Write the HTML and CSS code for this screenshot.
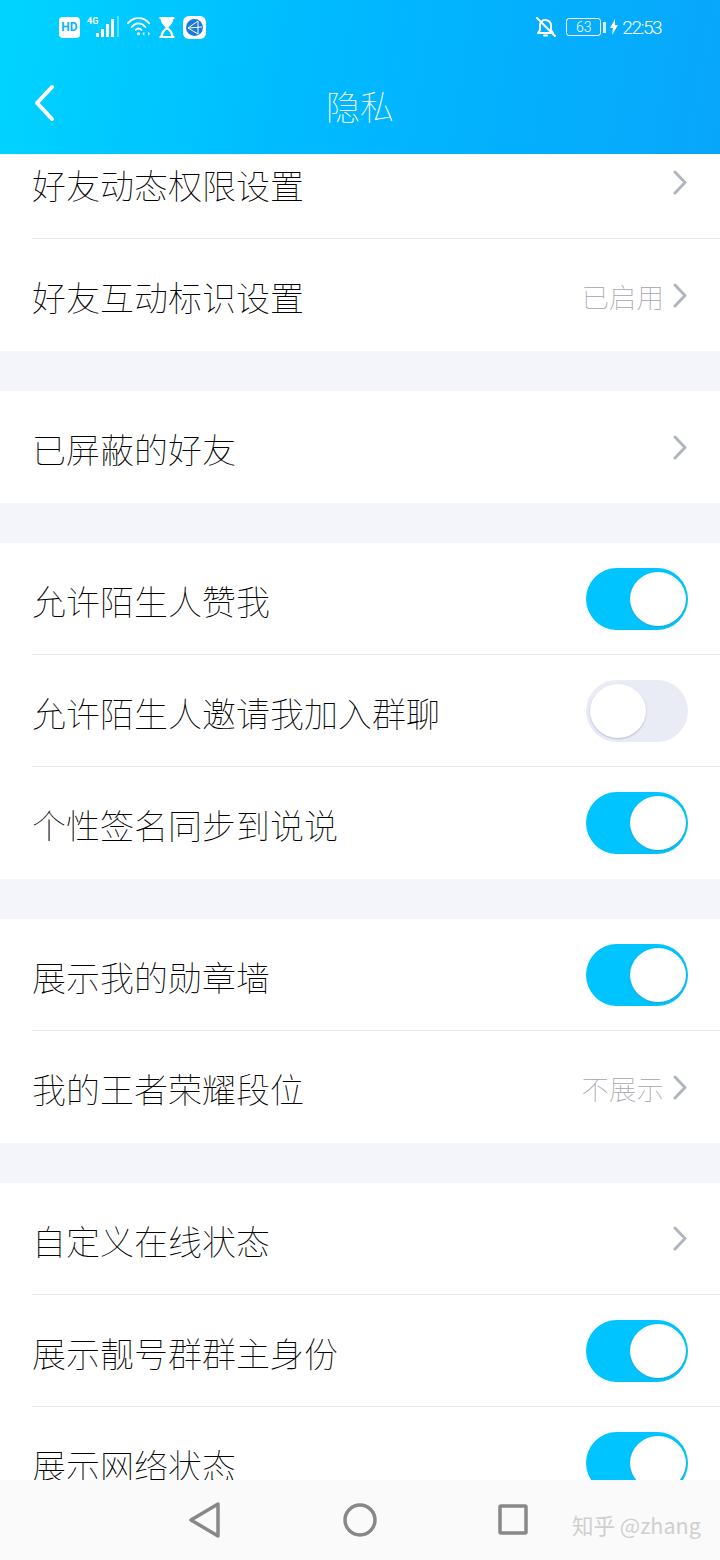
FILE: index.html
```html
<!DOCTYPE html>
<html>
<head>
    <meta charset="utf-8">
    <title>隐私</title>
    <link rel="stylesheet" href="styles.css">
</head>
<body>
    <div class="screen">
        <header class="header">
            <div class="status-bar">
                <div class="status-left">
                    <span class="hd-badge">HD</span>
                    <svg class="signal" width="33" height="24" viewBox="0 0 33 24">
                        <text x="0" y="9" class="signal-text">4G</text>
                        <rect x="9" y="18" width="3" height="4" fill="#fff"/>
                        <rect x="14" y="14" width="3" height="8" fill="#fff"/>
                        <rect x="19" y="9" width="3" height="13" fill="#fff"/>
                        <rect x="24" y="4" width="3" height="18" fill="#fff"/>
                        <rect x="30" y="1" width="2" height="21" fill="#fff" opacity="0.35"/>
                    </svg>
                    <svg class="wifi" width="25" height="22" viewBox="0 0 26 22" fill="none" stroke="#fff" stroke-width="2" stroke-linecap="round">
                        <path d="M1 7 C7 0 17 0 23 7"/>
                        <path d="M5 11 C9 6 15 6 19 11"/>
                        <path d="M9 14 C11 12 13 12 15 14"/>
                        <circle cx="12" cy="18" r="1.6" fill="#fff" stroke="none"/>
                        <path d="M18 16 L16 18 L18 20 Z" fill="#fff" stroke="none"/>
                        <path d="M22 16 L24 18 L22 20 Z" fill="#fff" stroke="none"/>
                    </svg>
                    <svg class="hourglass" width="16" height="21" viewBox="0 0 15 21" fill="none" stroke="#fff" stroke-width="2">
                        <path d="M0 1 H15 M0 20 H15"/>
                        <path d="M2 1 C2 7 6 8 7.5 10.5 C9 8 13 7 13 1 Z" fill="#fff"/>
                        <path d="M7.5 10.5 C6 13 2 14 2 20 H13 C13 14 9 13 7.5 10.5 Z"/>
                    </svg>
                    <svg class="app-icon" width="23" height="23" viewBox="0 0 23 23">
                        <rect width="23" height="23" rx="6" fill="#fff"/>
                        <circle cx="11.5" cy="11.5" r="8.5" fill="#1a7ad4"/>
                        <path d="M5 12 L15 5 L15 18 Z M5 12 L19 11" fill="none" stroke="#fff" stroke-width="1"/>
                    </svg>
                </div>
                <div class="status-right">
                    <svg class="bell" width="20" height="20" viewBox="0 0 20 20" fill="none" stroke="#fff" stroke-width="2" stroke-linecap="round" stroke-linejoin="round">
                        <path d="M2 16 H17 L15 13 V8 C15 5 12 3 9 3 C6 3 4 6 4 8 V13 Z"/>
                        <path d="M1 1 L19 19"/>
                        <path d="M8 18.5 H11"/>
                    </svg>
                    <span class="battery"><span class="battery-level">63</span></span>
                    <span class="battery-tip"></span>
                    <svg class="bolt" width="8" height="16" viewBox="0 0 8 16"><path d="M5 0 L0 9 H3 L2 16 L8 6 H5 Z" fill="#fff"/></svg>
                    <span class="clock">22:53</span>
                </div>
            </div>
            <div class="title-bar">
                <svg class="back" width="22" height="38" viewBox="0 0 22 38" fill="none" stroke="#fff" stroke-width="4" stroke-linecap="round" stroke-linejoin="round">
                    <path d="M19 3 L4 19 L19 35"/>
                </svg>
                <h1 class="title">隐私</h1>
            </div>
        </header>

        <main class="list">
            <div class="list-inner">
                <section class="group">
                    <div class="row">
                        <span class="row-label">好友动态权限设置</span>
                        <div class="row-right"><svg class="chevron" width="15" height="25" viewBox="0 0 15 25"><path d="M2 2 L12 12.5 L2 23"/></svg></div>
                    </div>
                    <div class="row">
                        <span class="row-label">好友互动标识设置</span>
                        <div class="row-right"><span class="row-value">已启用</span><svg class="chevron" width="15" height="25" viewBox="0 0 15 25"><path d="M2 2 L12 12.5 L2 23"/></svg></div>
                    </div>
                </section>
                <section class="group">
                    <div class="row">
                        <span class="row-label">已屏蔽的好友</span>
                        <div class="row-right"><svg class="chevron" width="15" height="25" viewBox="0 0 15 25"><path d="M2 2 L12 12.5 L2 23"/></svg></div>
                    </div>
                </section>
                <section class="group">
                    <div class="row">
                        <span class="row-label">允许陌生人赞我</span>
                        <div class="toggle on"><span class="knob"></span></div>
                    </div>
                    <div class="row">
                        <span class="row-label">允许陌生人邀请我加入群聊</span>
                        <div class="toggle"><span class="knob"></span></div>
                    </div>
                    <div class="row">
                        <span class="row-label">个性签名同步到说说</span>
                        <div class="toggle on"><span class="knob"></span></div>
                    </div>
                </section>
                <section class="group">
                    <div class="row">
                        <span class="row-label">展示我的勋章墙</span>
                        <div class="toggle on"><span class="knob"></span></div>
                    </div>
                    <div class="row">
                        <span class="row-label">我的王者荣耀段位</span>
                        <div class="row-right"><span class="row-value">不展示</span><svg class="chevron" width="15" height="25" viewBox="0 0 15 25"><path d="M2 2 L12 12.5 L2 23"/></svg></div>
                    </div>
                </section>
                <section class="group">
                    <div class="row">
                        <span class="row-label">自定义在线状态</span>
                        <div class="row-right"><svg class="chevron" width="15" height="25" viewBox="0 0 15 25"><path d="M2 2 L12 12.5 L2 23"/></svg></div>
                    </div>
                    <div class="row">
                        <span class="row-label">展示靓号群群主身份</span>
                        <div class="toggle on"><span class="knob"></span></div>
                    </div>
                    <div class="row">
                        <span class="row-label">展示网络状态</span>
                        <div class="toggle on"><span class="knob"></span></div>
                    </div>
                </section>
            </div>
        </main>

        <nav class="nav-bar">
            <svg width="32" height="36" viewBox="0 0 32 36" fill="none" stroke="#888" stroke-width="3.5" stroke-linejoin="round">
                <path d="M29 2 V34 L2 18 Z"/>
            </svg>
            <svg width="34" height="34" viewBox="0 0 34 34" fill="none" stroke="#888" stroke-width="3.5">
                <circle cx="17" cy="17" r="15"/>
            </svg>
            <svg class="nav-square" width="30" height="31" viewBox="0 0 30 31" fill="none" stroke="#888" stroke-width="3.5" stroke-linejoin="round">
                <rect x="2" y="2" width="26" height="27" rx="1"/>
            </svg>
            <span class="watermark">知乎 @zhang</span>
        </nav>
    </div>
</body>
</html>
```

FILE: styles.css
```css
* {
    box-sizing: border-box;
}

body {
    margin: 0;
    font-family: "Noto Sans CJK SC", "Noto Sans", sans-serif;
    background-color: #ffffff;
}

.screen {
    width: 720px;
    height: 1560px;
    display: flex;
    flex-direction: column;
    overflow: hidden;
}

/* header */
.header {
    flex: none;
    height: 154px;
    background: linear-gradient(100deg, #00d4ff 0%, #00b9ff 45%, #08a6fb 100%);
    color: #ffffff;
}

.status-bar {
    height: 54px;
    display: flex;
    justify-content: space-between;
    align-items: center;
    padding: 0 59px;
}

.status-left {
    display: flex;
    align-items: center;
    gap: 7px;
}

.status-right {
    display: flex;
    align-items: center;
}

.hd-badge {
    width: 21px;
    height: 21px;
    background-color: #ffffff;
    color: #0cb4f8;
    border-radius: 4px;
    font-family: "Roboto", sans-serif;
    font-size: 12px;
    font-weight: 700;
    line-height: 21px;
    text-align: center;
}

.signal-text {
    font-family: "Roboto", sans-serif;
    font-size: 9px;
    font-weight: 700;
    fill: #ffffff;
}

.app-icon {
    margin-left: 1px;
}

.bell {
    margin-right: 10px;
}

.battery {
    width: 35px;
    height: 18px;
    border: 1px solid #ffffff;
    border-radius: 3px;
    text-align: center;
}

.battery-level {
    display: block;
    font-family: "Roboto", sans-serif;
    font-size: 14px;
    font-weight: 300;
    line-height: 16px;
}

.battery-tip {
    width: 3px;
    height: 11px;
    margin: 0 4px 0 2px;
    background-color: #ffffff;
    opacity: 0.8;
}

.bolt {
    margin-right: 4px;
}

.clock {
    font-family: "Roboto", sans-serif;
    font-size: 19px;
    font-weight: 300;
    letter-spacing: -1.5px;
}

.title-bar {
    height: 100px;
    padding-top: 4px;
    display: flex;
    justify-content: center;
    align-items: center;
    position: relative;
}

.back {
    position: absolute;
    left: 33px;
    top: 30px;
}

.title {
    margin: 0;
    font-size: 34px;
    font-weight: 100;
    line-height: 1;
}

/* settings list */
.list {
    flex: 1;
    min-height: 0;
    overflow: hidden;
    background-color: #f3f5fa;
}

.list-inner {
    margin-top: -27px;
    display: flex;
    flex-direction: column;
    gap: 40px;
}

.group {
    background-color: #ffffff;
    padding-left: 32px;
}

.row {
    height: 112px;
    display: flex;
    justify-content: space-between;
    align-items: center;
    padding-right: 32px;
    border-bottom: 1px solid #e8e9ec;
}

.row:last-child {
    border-bottom: none;
}

.row-label {
    padding-top: 3px;
    font-size: 34px;
    font-weight: 100;
    color: #000000;
}

.row-right {
    display: flex;
    align-items: center;
    gap: 9px;
}

.row-value {
    padding-top: 1px;
    font-size: 27.5px;
    font-weight: 100;
    color: #a4a6ac;
}

.chevron {
    fill: none;
    stroke: #b1b5c0;
    stroke-width: 3;
    stroke-linecap: round;
    stroke-linejoin: round;
}

.toggle {
    width: 102px;
    height: 62px;
    padding: 4px;
    display: flex;
    border-radius: 31px;
    background-color: #e9ecf5;
}

.toggle.on {
    justify-content: flex-end;
    padding-right: 2px;
    background-color: #00c4ff;
}

.knob {
    width: 56px;
    height: 54px;
    border-radius: 50%;
    background-color: #ffffff;
    box-shadow: 0 1px 2px rgba(90, 100, 130, 0.35);
}

/* bottom nav */
.nav-bar {
    flex: none;
    height: 80px;
    padding: 0 0 1px 189px;
    display: flex;
    align-items: center;
    gap: 122px;
    background-color: #fafafa;
    position: relative;
}

.nav-square {
    margin-left: -1px;
}

.watermark {
    position: absolute;
    left: 572px;
    top: 29px;
    font-size: 21.5px;
    color: #cfcfcf;
    white-space: nowrap;
}
```
